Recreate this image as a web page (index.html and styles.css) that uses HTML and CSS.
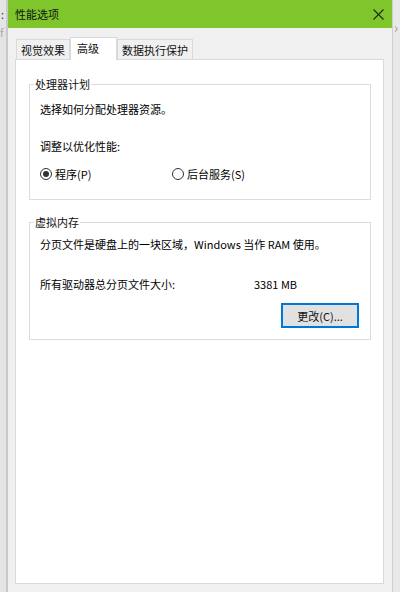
FILE: index.html
```html
<!DOCTYPE html>
<html lang="zh-CN">
<head>
    <meta charset="UTF-8">
    <meta name="viewport" content="width=device-width, initial-scale=1.0">
    <title>性能选项</title>
    <link rel="stylesheet" href="styles.css">
</head>
<body>
    <div class="screen">
        <div class="side side-left">
            <span class="peek peek-dark">:</span>
            <span class="peek peek-light">f</span>
        </div>

        <div class="dialog">
            <header class="titlebar">
                <span class="title">性能选项</span>
                <svg class="close" viewBox="0 0 11 11" fill="none" stroke="currentColor" stroke-width="1.1">
                    <line x1="0.5" y1="0.5" x2="10.5" y2="10.5"></line>
                    <line x1="10.5" y1="0.5" x2="0.5" y2="10.5"></line>
                </svg>
            </header>

            <div class="dialog-body">
                <nav class="tabs">
                    <div class="tab">视觉效果</div>
                    <div class="tab active">高级</div>
                    <div class="tab">数据执行保护</div>
                </nav>

                <div class="panel">
                    <section class="group">
                        <div class="group-title">处理器计划</div>
                        <p class="line first">选择如何分配处理器资源。</p>
                        <p class="line gap-lg">调整以优化性能:</p>
                        <div class="radios">
                            <label class="radio checked"><span class="dot"></span>程序(P)</label>
                            <label class="radio"><span class="dot"></span>后台服务(S)</label>
                        </div>
                    </section>

                    <section class="group group-memory">
                        <div class="group-title">虚拟内存</div>
                        <p class="line first-sm">分页文件是硬盘上的一块区域，Windows 当作 RAM 使用。</p>
                        <div class="line size-row">
                            <span class="size-label">所有驱动器总分页文件大小:</span>
                            <span>3381 MB</span>
                        </div>
                        <div class="button-row">
                            <button class="btn">更改(C)...</button>
                        </div>
                    </section>
                </div>
            </div>
        </div>

        <div class="side side-right">
            <span class="peek peek-light">›</span>
        </div>
    </div>
</body>
</html>
```

FILE: styles.css
```css
*{margin:0;padding:0;box-sizing:border-box}
body{font-family:"Noto Sans CJK SC","Noto Sans",sans-serif;font-size:11px;line-height:16px;color:#000;background:#e6e6e6}

.screen{display:flex;width:400px;height:592px;overflow:hidden}

.side{width:8px;flex:none;background:#e4e4e4;overflow:hidden;display:flex;flex-direction:column}
.side-left{box-shadow:inset -2px 0 #c9c9c9}
.side-left .peek-dark{margin:6px 0 0 1px;color:#333;font-size:11px}
.side-left .peek-light{margin:2px 0 0 0;color:#aaa}
.side-right{box-shadow:inset 1px 0 #cfcfcf;background:#e9e9e9}
.side-right .peek-light{margin:19px 0 0 2px;color:#999;font-size:14px}

.dialog{width:384px;flex:none;display:flex;flex-direction:column;background:#f0f0f0}

.titlebar{height:28px;background:#7ec62c;display:flex;align-items:center;justify-content:space-between;padding:0 8px 0 7px}
.title{font-size:11px;color:#111}
.close{width:11px;height:11px;color:#1d2a12}

.dialog-body{flex:1;padding:9px 8px 0 7px}

.tabs{display:flex;align-items:flex-end;height:23px;margin-bottom:-1px;padding-left:1px;position:relative;z-index:1}
.tab{height:20px;margin-bottom:1px;padding:0 4px;border:1px solid #d9d9d9;border-bottom:none;background:#f0f0f0;display:flex;align-items:center;color:#111}
.tab.active{height:23px;margin-bottom:0;padding:0 17px 2px 6px;background:#fff}

.panel{height:525px;background:#fff;border:1px solid #d9d9d9;padding:0 12px 0 13px;overflow:hidden}

.group{margin-top:24px;border:1px solid #dcdcdc;padding:0 11px 17px 10px}
.group-memory{margin-top:22px;padding-bottom:11px}
.group-title{width:fit-content;margin:-8px 0 0 -6px;padding:0 1px;background:#fff;line-height:14px;color:#111}

.line{height:16px;white-space:nowrap}
.first{margin-top:10px}
.first-sm{margin-top:7px}
.gap-lg{margin-top:21px}

.radios{display:flex;margin-top:12px;height:16px}
.radio{display:flex;align-items:center;gap:3px}
.radio:first-child{width:132px}
.dot{width:12px;height:12px;border:1px solid #333;border-radius:50%;display:flex;align-items:center;justify-content:center}
.radio.checked .dot::after{content:"";width:6px;height:6px;border-radius:50%;background:#333}

.size-row{display:flex;margin-top:24px}
.size-label{width:214px}

.button-row{display:flex;justify-content:flex-end;margin-top:11px}
.btn{width:78px;height:25px;font:inherit;color:#111;background:#e1e1e1;border:1px solid #0078d7;box-shadow:inset 0 0 0 1px #0078d7}
```
